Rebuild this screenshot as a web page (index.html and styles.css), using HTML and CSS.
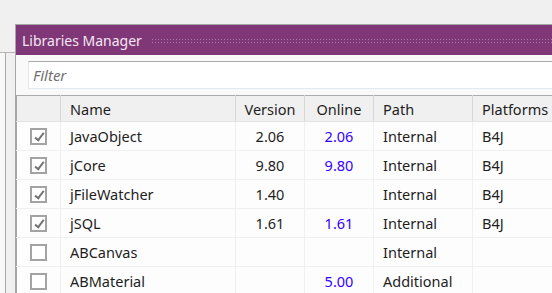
FILE: index.html
```html
<!DOCTYPE html>
<html lang="en">
<head>
    <meta charset="UTF-8">
    <title>Libraries Manager</title>
    <link rel="stylesheet" href="styles.css">
</head>
<body>
    <div class="side-pane">
        <div class="side-inner"></div>
    </div>
    <div class="window">
        <div class="title-bar">
            <span class="title">Libraries Manager</span>
            <span class="grip"></span>
        </div>
        <div class="content">
            <div class="filter-row">
                <input type="text" class="filter" placeholder="Filter">
            </div>
            <table class="libs">
                <colgroup>
                    <col class="c-check">
                    <col class="c-name">
                    <col class="c-version">
                    <col class="c-online">
                    <col class="c-path">
                    <col class="c-platforms">
                </colgroup>
                <thead>
                    <tr>
                        <th></th>
                        <th class="left">Name</th>
                        <th>Version</th>
                        <th>Online</th>
                        <th class="left">Path</th>
                        <th class="left">Platforms</th>
                    </tr>
                </thead>
                <tbody>
                    <tr>
                        <td class="check"><span class="box checked"></span></td>
                        <td>JavaObject</td>
                        <td class="num">2.06</td>
                        <td class="num online">2.06</td>
                        <td>Internal</td>
                        <td>B4J</td>
                    </tr>
                    <tr>
                        <td class="check"><span class="box checked"></span></td>
                        <td>jCore</td>
                        <td class="num">9.80</td>
                        <td class="num online">9.80</td>
                        <td>Internal</td>
                        <td>B4J</td>
                    </tr>
                    <tr>
                        <td class="check"><span class="box checked"></span></td>
                        <td>jFileWatcher</td>
                        <td class="num">1.40</td>
                        <td class="num online"></td>
                        <td>Internal</td>
                        <td>B4J</td>
                    </tr>
                    <tr>
                        <td class="check"><span class="box checked"></span></td>
                        <td>jSQL</td>
                        <td class="num">1.61</td>
                        <td class="num online">1.61</td>
                        <td>Internal</td>
                        <td>B4J</td>
                    </tr>
                    <tr>
                        <td class="check"><span class="box"></span></td>
                        <td>ABCanvas</td>
                        <td class="num"></td>
                        <td class="num online"></td>
                        <td>Internal</td>
                        <td></td>
                    </tr>
                    <tr>
                        <td class="check"><span class="box"></span></td>
                        <td>ABMaterial</td>
                        <td class="num"></td>
                        <td class="num online">5.00</td>
                        <td>Additional</td>
                        <td></td>
                    </tr>
                </tbody>
            </table>
        </div>
    </div>
</body>
</html>
```

FILE: styles.css
```css
html, body {
    margin: 0;
    padding: 0;
}
body {
    width: 552px;
    height: 293px;
    overflow: hidden;
    background-color: #f0f0f0;
    font-family: "Noto Sans", "Open Sans", sans-serif;
    font-size: 14.5px;
    color: #1e1e1e;
    display: flex;
    align-items: flex-start;
}
.side-pane {
    flex: none;
    width: 15px;
    height: 241px;
    margin-top: 52px;
    border-top: 1px solid #b4b4b4;
    background: #f8f8f8;
    display: flex;
    justify-content: flex-end;
}
.side-inner {
    width: 9px;
    height: 100%;
    border-left: 1px solid #a8a8a8;
    background: #f0f0f0;
}
.window {
    flex: 1;
    min-width: 0;
    height: 269px;
    overflow: hidden;
    margin-top: 24px;
    border-top: 1px solid #a6a6a6;
    border-left: 1px solid #a6a6a6;
    background: #f9f9f9;
}
.title-bar {
    height: 30px;
    background-color: #7f3777;
    display: flex;
    align-items: center;
    padding-left: 6px;
}
.title {
    color: #f4e8f2;
    font-size: 14px;
}
.grip {
    flex: 1;
    height: 6px;
    margin-left: 9px;
    margin-top: 2px;
    background-image: radial-gradient(circle, rgba(255, 255, 255, 0.32) 0.7px, transparent 1px);
    background-size: 3px 3px;
}
.content {
    padding-top: 6px;
}
.filter-row {
    padding-left: 12px;
    padding-bottom: 6px;
}
.filter {
    display: block;
    width: 100%;
    box-sizing: border-box;
    height: 28px;
    margin: 0;
    padding: 0 4px;
    border: 1px solid #e3e9ef;
    border-top-color: #ababab;
    border-right: none;
    background: white;
    font-family: inherit;
    font-size: 15px;
    outline: none;
}
.filter::placeholder {
    color: #707070;
    font-style: italic;
}
.libs {
    border-collapse: collapse;
    table-layout: fixed;
    width: 600px;
    background: #fdfdfd;
    border-top: 1px solid #acacac;
    border-left: 1px solid #a6a6a6;
}
.c-check { width: 44px; }
.c-name { width: 175px; }
.c-version { width: 69px; }
.c-online { width: 69px; }
.c-path { width: 99px; }
.c-platforms { width: 144px; }
.libs th {
    height: 25px;
    padding: 0;
    background: #f0f0f0;
    border-right: 1px solid #d6d6d6;
    border-bottom: 1px solid #e2e2e2;
    font-weight: normal;
    text-align: center;
    color: #1e1e1e;
}
.libs th.left {
    text-align: left;
    padding-left: 9px;
}
.libs td {
    height: 28px;
    padding: 0 0 0 9px;
    border-right: 1px solid #f0f0f0;
    border-bottom: 1px solid #f0f0f0;
    white-space: nowrap;
}
.libs td.num {
    text-align: center;
    padding-left: 0;
}
.libs td.online {
    color: #3300ff;
}
.libs td.check {
    padding: 0;
    text-align: center;
}
.box {
    display: inline-block;
    vertical-align: middle;
    width: 13px;
    height: 13px;
    border: 2px solid #a3a3a3;
    background: white;
    position: relative;
    top: -1px;
}
.box.checked::after {
    content: "";
    position: absolute;
    left: 5px;
    top: 1px;
    width: 3px;
    height: 8px;
    border-right: 2px solid #737373;
    border-bottom: 2px solid #737373;
    transform: rotate(38deg);
}
```
